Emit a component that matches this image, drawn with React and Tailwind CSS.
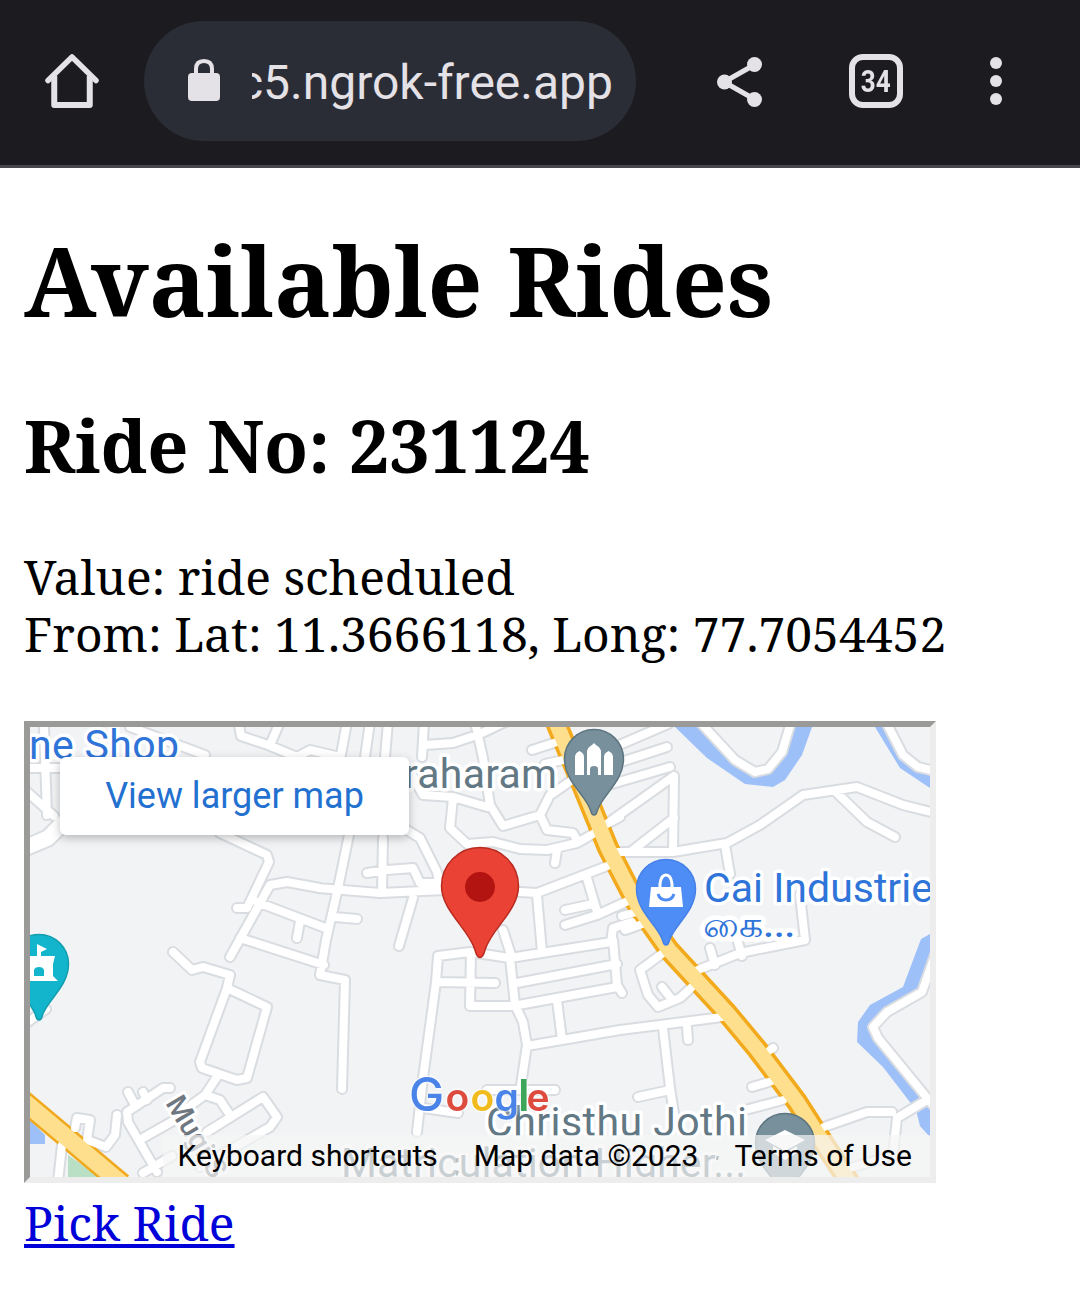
import React from "react";

const LOCAL_ROADS = [
  "M25 768H70 M44 727L47 815 M25 790L54 816 M130 727L205 755 M220 833L267 855L269 862L247 908H237",
  "M238 720L241 736L268 745L297 757L310 750L340 757 M270 745L280 722",
  "M320 888L287 882L270 885L230 957 M257 902L328 929 M300 921L297 938 M240 938L324 965",
  "M350 830L338 888L326 940L320 975L345 980L342 1089",
  "M347 722L340 760 M370 722L365 757 M388 722L385 757",
  "M424 722L422 757 M425 745L453 743L480 734L505 722 M475 722L483 758L490 805L503 826L540 815",
  "M412 775L423 795L453 797L487 807 M453 798L450 828L467 844L493 842L520 849L547 850L577 843L600 830",
  "M550 795L540 815L547 830L573 833L578 842 M557 850L555 863 M532 750L560 741 M552 794L572 780 M545 764L572 758",
  "M318 888L380 893L445 890 M405 829L420 838L437 872L440 885 M383 838L382 892",
  "M367 873L387 870L413 868L420 883H440 M413 898L399 946 M335 917L357 919",
  "M520 892L537 893L615 863 M537 895L542 952 M587 878L597 912 M565 910L593 904 M565 925L597 915L630 900",
  "M632 922L613 928L611 942L510 958L470 952L438 956L436 982L423 1078L417 1132 M503 930L512 958",
  "M437 982L495 983 M471 952L470 1006L513 1006L617 987 M510 958L515 1005L523 1022L527 1045L521 1085",
  "M517 983L617 964 M613 940L617 985L622 993 M557 1000L562 1040 M527 1046L620 1030L660 1025L722 1017",
  "M487 1090H555 M423 1108L458 1113 M625 930L648 922 M622 916L640 911",
  "M610 749L668 724 M615 764L667 747 M612 784L670 767 M608 823L674 776L673 852 M674 818L633 850",
  "M605 825L620 817 M615 852H673L727 843L760 825L803 795L857 787L903 805L935 813 M837 793L867 822L895 837",
  "M725 845L730 874 M800 895L805 940L740 953L698 970 M710 948L715 965 M738 942L742 956",
  "M663 953L640 970L648 995L658 1007L680 998L692 987 M662 987L670 997",
  "M663 1028L670 1088L675 1120 M638 1097L670 1090 M687 1027L688 1040",
  "M770 1050L773 1048 M752 1087L772 1081 M783 1100L745 1110 M824 1127L867 1112H892",
  "M927 1100L897 1118L893 1155 M850 1168L885 1158",
  "M173 952L192 970L203 967L230 975L227 988L200 1062L202 1068L237 1080L247 1078L267 1007L227 988",
  "M217 1077L205 1095L187 1108 M205 1095L220 1100L228 1112 M207 1132L263 1097L277 1117L270 1127L200 1167",
  "M128 1092L135 1105 M143 1092L147 1100 M170 1088H163L127 1112L128 1122L157 1172 M143 1138L180 1117",
  "M143 1173L172 1156 M75 1128L77 1118L90 1120L87 1140L106 1147L115 1135L117 1115 M62 1145L58 1182",
  "M25 1024L46 1009",
  "M700 722L735 760L755 772L768 769L782 752L791 722 M886 722L903 755L918 767L935 771",
  "M935 955L922 992L887 1012L873 1027L878 1038L932 1104",
].join(" ");

const HIGHWAY = "M555 720L583 787L608 848L638 906L669 950L727 1013L757 1049L797 1102L813 1127L850 1183";
const HIGHWAY_WEST = "M15 1094L122 1184";

function Pin({ x, y, fill, stroke, children }) {
  return (
    <g transform={`translate(${x} ${y})`}>
      <path
        d="M0 55C-1.800 55 -2.600 53.500 -3.200 51C-7 36 -29.500 22 -29.500 -1A29.500 29.500 0 0 1 29.500 -1C29.500 22 7 36 3.200 51C2.600 53.500 1.800 55 0 55Z"
        fill={fill}
        stroke={stroke}
        strokeWidth="1.500"
      />
      {children}
    </g>
  );
}

function MapDrawing() {
  const label = { fontFamily: "Roboto, sans-serif", paintOrder: "stroke", stroke: "#fff", strokeLinejoin: "round" };
  return (
    <svg className="block h-full w-full" viewBox="30 727 900 450" aria-label="Map">
      <rect x="30" y="727" width="900" height="450" fill="#f1f3f5" />
      <g fill="#9dc0f9">
        <path d="M675 727L707 758L745 784L773 787L785 780L802 755L812 727H790L778 758L758 772L738 766L704 727Z" />
        <path d="M875 727L900 768L930 788V770L903 755L889 727Z" />
        <path d="M930 934L921 939L903 987L870 1005L858 1022L857 1042L883 1067L916 1110L920 1126L930 1137V1095L877 1035L873 1024L890 1008L922 992L930 965Z" />
        <path d="M30 1120L45 1135V1144H30Z" />
      </g>
      <path d="M68 1155V1177H100Z" fill="#b9dfc5" />
      <g fill="none" strokeLinejoin="round" strokeLinecap="round">
        <path d="M20 850L48 838L64 822" stroke="#d9dce0" strokeWidth="19" />
        <path d={LOCAL_ROADS} stroke="#d9dce0" strokeWidth="12" />
        <path d="M20 850L48 838L64 822" stroke="#fff" strokeWidth="15" />
      </g>
      <g fill="none" strokeLinejoin="round">
        <path d={HIGHWAY} stroke="#f2a91b" strokeWidth="22" />
        <path d={HIGHWAY_WEST} stroke="#f0a81c" strokeWidth="22" />
        <path d={LOCAL_ROADS} stroke="#fff" strokeWidth="8" strokeLinecap="round" />
        <path d={HIGHWAY} stroke="#fddf8d" strokeWidth="15" />
        <path d={HIGHWAY_WEST} stroke="#fddf8d" strokeWidth="17" />
      </g>

      <g {...label} strokeWidth="7">
        <text x="29" y="759" fontSize="41" fill="#2f74d8" textLength="150">ne Shop</text>
        <text x="404" y="788" fontSize="41" fill="#627884" textLength="153">raharam</text>
        <text x="704" y="902" fontSize="41" fill="#2f74d8" textLength="229">Cai Industrie</text>
        <text transform="translate(703 937) scale(1 1.350)" fontSize="26" fontWeight="500" fill="#2f74d8" textLength="92" lengthAdjust="spacingAndGlyphs">கை...</text>
        <text x="486" y="1136" fontSize="41" fill="#627884" textLength="261">Christhu Jothi</text>
        <text x="341" y="1177" fontSize="41" fill="#627884" textLength="405">Matriculation Higher...</text>
        <text transform="translate(165 1103) rotate(59)" fontSize="29" fontWeight="500" fill="#6f7780" strokeWidth="6">Mugi S</text>
      </g>

      <Pin x={594} y={760} fill="#78909c" stroke="#5d7580">
        <path d="M-19 15V-3Q-19 -7 -14.500 -9Q-10 -7 -10 -3V15Z M-7 15V-9Q-6 -13 -2 -15L0 -17L2 -15Q6 -13 7 -9V15H4V9Q4 6 0 6Q-4 6 -4 9V15Z M10 15V-3Q10 -7 14.500 -9Q19 -7 19 -3V15Z" fill="#fff" />
      </Pin>
      <Pin x={666} y={890} fill="#4e8df5" stroke="#4581e8">
        <path d="M-15 -3H15L17 17H-17Z" fill="#fff" />
        <path d="M-6 -2V-6Q-5 -15 0 -15Q5 -15 6 -6V-2" fill="none" stroke="#fff" strokeWidth="3" />
        <path d="M-8 4Q-6 10 0 10Q6 10 8 4" fill="none" stroke="#4e8df5" strokeWidth="3" />
      </Pin>
      <Pin x={39} y={965} fill="#12b5cb" stroke="#129eaf">
        <path d="M-20 -9H-2V-21L8 -16L2 -13V-9H16L14 -1V11L19 16H-20Z" fill="#fff" />
        <path d="M-5 11V5Q-4 2 0 2Q4 2 5 5V11Z" fill="#12b5cb" />
      </Pin>
      <Pin x={785} y={1144} fill="#78909c" stroke="#5d7580">
        <path d="M-20 -4L0 -14L20 -4L0 7Z" fill="#fff" />
        <path d="M-12 2L0 9L12 2V9L0 16L-12 9Z" fill="#fff" />
      </Pin>

      <path d="M480 957.500C477 957.500 476 954 475 950C469 929 441.500 911 441.500 886A38.500 38.500 0 0 1 518.500 886C518.500 911 491 929 485 950C484 954 483 957.500 480 957.500Z" fill="#ea4335" stroke="#b92a20" strokeWidth="1.500" />
      <circle cx="480" cy="887" r="15" fill="#b31412" />

      <g fill="#37474f">
        <rect x="456" y="1158" width="2.500" height="4" />
        <path d="M456 1171H459L457.500 1175.500H456Z" />
        <path d="M716.500 1156H719L718 1160H716Z" />
      </g>

      <g className="[filter:drop-shadow(0_0_1px_white)_drop-shadow(0_0_1px_white)]" fontFamily="Inter, sans-serif" fontWeight="600" fontSize="39">
        <text y="1111">
          <tspan x="409" fontSize="47" fontWeight="500" fill="#4a84e8">G</tspan>
          <tspan x="445.500" fill="#dc4b3e">o</tspan>
          <tspan x="470.500" fill="#f1bb1d">o</tspan>
          <tspan x="494.500" fill="#4a84e8">g</tspan>
          <tspan x="518" fontSize="44" fill="#3ea65a">l</tspan>
          <tspan x="526.500" fill="#dc4b3e">e</tspan>
        </text>
      </g>
    </svg>
  );
}

function BrowserBar() {
  return (
    <header className="flex h-[168px] items-start border-b-[3px] border-[#47464c] bg-[#1c1b1f] text-[#e4e1e7]">
      <div className="flex h-[162px] w-36 items-center justify-center">
        <svg width="56" height="56" viewBox="44 53 56 56" fill="none" stroke="currentColor">
          <path d="M48 80.500L72 57L96 80.500" strokeWidth="5.500" strokeLinecap="round" strokeLinejoin="round" />
          <path d="M54.500 76V105H90V76" transform="translate(-.250 0)" strokeWidth="6" strokeLinejoin="round" />
        </svg>
      </div>
      <div className="mt-[21px] flex h-[120px] w-[492px] items-center rounded-full bg-[#2b2d36] pr-[23px] pl-11">
        <svg className="shrink-0" width="32" height="44" viewBox="188 59 32 44">
          <rect x="188" y="73" width="32" height="28" rx="4" fill="currentColor" />
          <path d="M196 75V69Q196 61 204 61Q212 61 212 69V75" fill="none" stroke="currentColor" strokeWidth="4" />
        </svg>
        <div className="mt-1 ml-8 flex flex-1 justify-end overflow-hidden font-[Roboto,sans-serif] text-5xl leading-[64px] whitespace-nowrap">
          <span>c5.ngrok-free.app</span>
        </div>
      </div>
      <div className="ml-9 flex h-[162px] w-[136px] items-center justify-center">
        <svg width="48" height="52" viewBox="716 55 48 52" fill="currentColor" stroke="currentColor">
          <path d="M755 64.500L724 82L755 99.500" fill="none" strokeWidth="5" />
          <g stroke="none">
            <circle cx="754.500" cy="64.500" r="7.500" />
            <circle cx="724.500" cy="82" r="7.500" />
            <circle cx="754.500" cy="99.500" r="7.500" />
          </g>
        </svg>
      </div>
      <div className="flex h-[162px] w-[136px] items-center justify-center">
        <div className="flex h-[54px] w-[54px] items-center justify-center rounded-[14px] border-[6px] border-current font-[Roboto,sans-serif] text-[31px] leading-none font-bold">
          <span className="scale-x-[0.84]">34</span>
        </div>
      </div>
      <div className="flex h-[162px] w-[104px] flex-col items-center justify-center gap-1.5">
        <i className="size-3 rounded-full bg-current" />
        <i className="size-3 rounded-full bg-current" />
        <i className="size-3 rounded-full bg-current" />
      </div>
    </header>
  );
}

export default function App() {
  return (
    <div className="h-[1297px] w-[1080px] overflow-hidden bg-white text-black">
      <BrowserBar />
      <main className="px-6 font-['Noto_Serif','Droid_Serif','DejaVu_Serif_Condensed','DejaVu_Serif',serif] whitespace-nowrap">
        <h1 className="mt-[47px] h-[130px] text-[96px] leading-[130px] font-bold">Available Rides</h1>
        <h2 className="mt-[51px] h-[98px] text-[72px] leading-[98px] font-bold">
          Ride No: <span className="tracking-[-0.6px]">231124</span>
        </h2>
        <div className="mt-[54px] text-5xl leading-[57px]">
          <p>Value: ride scheduled</p>
          <p>From: Lat: 11.3666118, Long: 77.7054452</p>
        </div>
        <div className="relative mt-[59px] h-[462px] w-[912px] overflow-hidden border-6 border-t-[#9a9a99] border-r-[#ededed] border-b-[#ededed] border-l-[#9a9a99] font-[Roboto,sans-serif]">
          <MapDrawing />
          <a className="absolute top-[30px] left-[30px] flex h-[78px] w-[349px] items-center justify-center rounded-md bg-white text-4xl text-[#2270d0] shadow-[0_3px_10px_rgba(0,0,0,0.25)]">
            View larger map
          </a>
          <div className="absolute right-0 bottom-0 flex h-[42px] items-center gap-9 bg-[#f5f5f5]/70 pr-[18px] pl-[15px] text-[30px] leading-[42px]">
            <span>Keyboard shortcuts</span>
            <span>Map data ©2023</span>
            <span>Terms of Use</span>
          </div>
        </div>
        <a className="mt-[11px] block w-fit text-5xl leading-[57px] text-[#0000d8] underline">Pick Ride</a>
      </main>
    </div>
  );
}
